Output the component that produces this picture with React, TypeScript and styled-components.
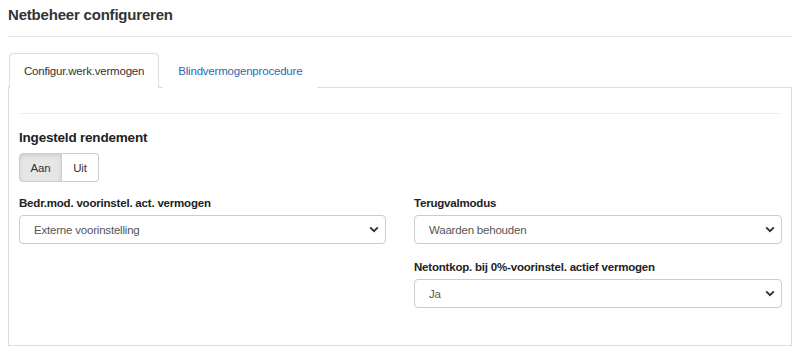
import React from "react";
import styled, { createGlobalStyle } from "styled-components";

const GlobalStyle = createGlobalStyle`
  html, body {
    margin: 0;
    padding: 0;
    background: #ffffff;
  }
  body {
    font-family: "Liberation Sans", Arial, sans-serif;
    color: #333333;
  }
`;

const Page = styled.div`
  padding: 0 8px;
`;

const Header = styled.h1`
  margin: 0;
  padding: 4px 0 11px;
  font-size: 15px;
  letter-spacing: -0.2px;
  line-height: 21px;
  font-weight: bold;
  color: #333333;
  border-bottom: 1px solid #e5e5e5;
`;

const TabBar = styled.div`
  display: flex;
  margin-top: 16px;
  padding-left: 1px;
`;

const Tab = styled.div<{ $active?: boolean }>`
  height: 35px;
  box-sizing: border-box;
  padding: 0 14px;
  display: flex;
  align-items: center;
  font-size: 11.5px;
  letter-spacing: -0.2px;
  color: ${(p) => (p.$active ? "#333333" : "#2a6bb5")};
  background: #ffffff;
  border: 1px solid ${(p) => (p.$active ? "#dddddd" : "transparent")};
  border-bottom: none;
  border-radius: 4px 4px 0 0;
  margin-bottom: -1px;
  position: relative;
  z-index: 1;
  margin-right: 4px;
`;

const Panel = styled.div`
  border: 1px solid #dddddd;
  padding: 0 10px 37px;
`;

const Divider = styled.div`
  height: 25px;
  border-bottom: 1px solid #eeeeee;
`;

const SectionTitle = styled.h2`
  margin: 16px 0 0;
  font-size: 13.5px;
  letter-spacing: -0.2px;
  line-height: 16px;
  font-weight: bold;
  color: #222222;
`;

const ButtonGroup = styled.div`
  display: inline-flex;
  margin-top: 7px;
`;

const ToggleButton = styled.button<{ $active?: boolean; $width: number }>`
  width: ${(p) => p.$width}px;
  height: 29px;
  font-family: inherit;
  font-size: 11.5px;
  letter-spacing: -0.2px;
  color: #333333;
  background: ${(p) => (p.$active ? "#e6e6e6" : "#ffffff")};
  box-shadow: ${(p) => (p.$active ? "inset 0 2px 4px rgba(0,0,0,0.1)" : "none")};
  border: 1px solid #cccccc;
  padding: 0;
  cursor: pointer;
  &:first-child {
    border-radius: 4px 0 0 4px;
  }
  &:last-child {
    border-radius: 0 4px 4px 0;
    border-left: none;
  }
`;

const FieldGrid = styled.div`
  display: grid;
  grid-template-columns: 367px 368px;
  column-gap: 28px;
  margin-top: 14px;
`;

const Column = styled.div`
  display: flex;
  flex-direction: column;
  gap: 16px;
`;

const Field = styled.div`
  display: flex;
  flex-direction: column;
`;

const Label = styled.label`
  font-size: 11.5px;
  letter-spacing: -0.2px;
  line-height: 14px;
  font-weight: bold;
  color: #222222;
  margin-bottom: 5px;
`;

const SelectBox = styled.div`
  height: 29px;
  box-sizing: border-box;
  border: 1px solid #cccccc;
  border-radius: 4px;
  display: flex;
  align-items: center;
  justify-content: space-between;
  padding: 0 6px 0 14px;
  font-size: 11.5px;
  letter-spacing: -0.2px;
  color: #555555;
  background: #ffffff;
`;

const Chevron = () => (
  <svg width="10" height="7" viewBox="0 0 10 7">
    <path d="M1.2 1.4 L5 5.2 L8.8 1.4" fill="none" stroke="#333" strokeWidth="1.9" />
  </svg>
);

const Select: React.FC<{ value: string }> = ({ value }) => (
  <SelectBox>
    <span>{value}</span>
    <Chevron />
  </SelectBox>
);

export default function App() {
  return (
    <Page>
      <GlobalStyle />
      <Header>Netbeheer configureren</Header>
      <TabBar>
        <Tab $active>Configur.werk.vermogen</Tab>
        <Tab>Blindvermogenprocedure</Tab>
      </TabBar>
      <Panel>
        <Divider />
        <SectionTitle>Ingesteld rendement</SectionTitle>
        <ButtonGroup>
          <ToggleButton $active $width={43}>
            Aan
          </ToggleButton>
          <ToggleButton $width={37}>Uit</ToggleButton>
        </ButtonGroup>
        <FieldGrid>
          <Column>
            <Field>
              <Label>Bedr.mod. voorinstel. act. vermogen</Label>
              <Select value="Externe voorinstelling" />
            </Field>
          </Column>
          <Column>
            <Field>
              <Label>Terugvalmodus</Label>
              <Select value="Waarden behouden" />
            </Field>
            <Field>
              <Label>Netontkop. bij 0%-voorinstel. actief vermogen</Label>
              <Select value="Ja" />
            </Field>
          </Column>
        </FieldGrid>
      </Panel>
    </Page>
  );
}
